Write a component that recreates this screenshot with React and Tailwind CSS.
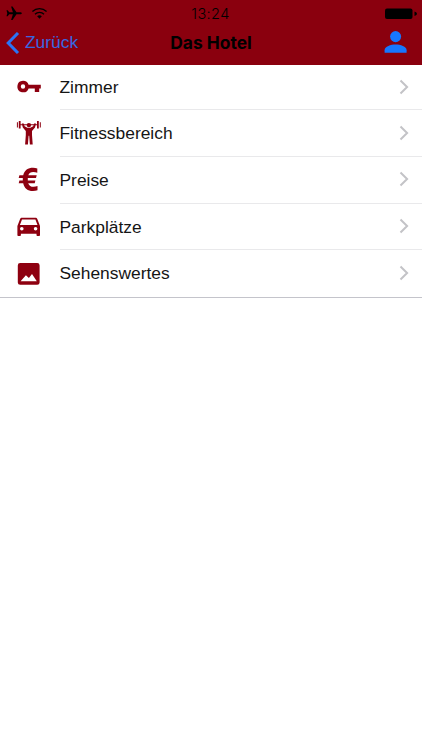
const iconClass = 'block h-7 w-7 fill-[#8e0010]'

function KeyIcon() {
  return (
    <svg viewBox="0 0 28 28" className={iconClass}>
      <path fillRule="evenodd" d="M9 6.7a5.8 5.8 0 0 1 5.6 4.1H26.8v3.7h-1.6v3.4h-4.4v-3.4h-6.2A5.8 5.8 0 1 1 9 6.7zm0 3.6a2.2 2.2 0 1 0 0 4.4 2.2 2.2 0 0 0 0-4.4z" />
    </svg>
  )
}

function FitnessIcon() {
  return (
    <svg viewBox="0 0 28 28" className={iconClass}>
      <path d="M2.9 2.2h1v5.2h-1zM4.8 1h1.8v7.6H4.8zM23 1h1.8v7.6H23zM25.8 2.2h1v5.2h-1zM6 4.3h17.2v1H6z" />
      <circle cx="14.9" cy="5.1" r="2.2" />
      <path d="M7.8 3.5h1.9l.9 2.8 2.8 1.4h3l2.8-1.4.9-2.8H22l-1 4.1-3 3.5v4l.7 9.4h-2.8l-.7-8.8h-.6l-.7 8.8h-2.8l.7-9.4v-4l-3-3.5z" />
    </svg>
  )
}

function EuroIcon() {
  return (
    <svg viewBox="0 0 28 28" className={iconClass}>
      <path d="M23.3 2.5v4.3c-1.4-.6-2.7-.8-4.1-.8-2.4 0-4.1 1-4.9 3.2h8.4l-.7 2.9h-8.2v2.3h7.6l-.7 2.8h-6.5c.8 2.5 2.6 3.6 5.4 3.6 1.4 0 2.6-.2 3.9-.7v4.2c-1.4.5-2.8.7-4.6.7-5.2 0-8.7-2.7-9.7-7.8H4.7l.7-2.8h3.4v-2.3H4.7l.7-2.9h3.8c1.2-4.9 4.8-7.4 9.9-7.4 1.6 0 2.9.2 4.2.7z" />
    </svg>
  )
}

function CarIcon() {
  return (
    <svg viewBox="0 0 28 28" className={iconClass}>
      <path fillRule="evenodd" d="M8 4.8h13.4c.9 0 1.6.5 1.9 1.3l2.7 6.8v9c0 .7-.5 1.2-1.2 1.2h-1.1c-.7 0-1.2-.5-1.2-1.2v-1.1H6.9v1.1c0 .7-.5 1.2-1.2 1.2H4.6c-.7 0-1.2-.5-1.2-1.2v-9l2.7-6.8c.3-.8 1-1.3 1.9-1.3zm0 1.6-2.1 5.5h17.6l-2.1-5.5zm-.2 7.6a1.8 1.8 0 1 0 0 3.6 1.8 1.8 0 0 0 0-3.6zm13.8 0a1.8 1.8 0 1 0 0 3.6 1.8 1.8 0 0 0 0-3.6z" />
    </svg>
  )
}

function ImageIcon() {
  return (
    <svg viewBox="0 0 28 28" className={iconClass}>
      <path fillRule="evenodd" d="M6.2 3h17a2.4 2.4 0 0 1 2.4 2.4v17a2.4 2.4 0 0 1-2.4 2.4h-17a2.4 2.4 0 0 1-2.4-2.4v-17A2.4 2.4 0 0 1 6.2 3zm.4 18.2h16.2l-4.8-7.2-3.1 4.1-3-2.8z" />
    </svg>
  )
}

const items = [
  { label: 'Zimmer', Icon: KeyIcon },
  { label: 'Fitnessbereich', Icon: FitnessIcon },
  { label: 'Preise', Icon: EuroIcon },
  { label: 'Parkplätze', Icon: CarIcon },
  { label: 'Sehenswertes', Icon: ImageIcon },
]

function StatusBar() {
  return (
    <div className="grid h-[26px] grid-cols-3 items-center pt-[2px] pr-1 pl-[6px]">
      <div className="flex items-center gap-[9px]">
        <svg viewBox="0 0 16 16" className="h-4 w-4">
          <path d="M15.8 7.3c0 .6-.8 1-1.7 1h-3.6l-4 5.7H5.1l1.8-5.7H3.2l-1.5 2H.5l.8-3-.8-3h1.2l1.5 2h3.7L5.1.6h1.4l4 5.7h3.6c.9 0 1.7.4 1.7 1z" />
        </svg>
        <svg viewBox="0 0 18 14" className="h-[14px] w-[17px]" fill="none" stroke="#000" strokeWidth="1.4">
          <path d="M1.5 4.4a10.8 10.8 0 0 1 15 0M4.2 7.2a7 7 0 0 1 9.6 0" />
          <path d="M6.5 9.5a3.7 3.7 0 0 1 5 0L9 12.1z" fill="#000" stroke="none" />
        </svg>
      </div>
      <span className="pr-[3px] text-center font-['Inter',sans-serif] text-[14.5px] leading-none font-light tracking-[0.4px] text-black">13:24</span>
      <svg viewBox="0 0 34 12" className="h-3 w-[34px] justify-self-end">
        <rect x="1" y="0.4" width="27.5" height="10.6" rx="2" />
        <path d="M30.5 3.5c1.6.5 2.4 1.2 2.4 2.2s-.8 1.7-2.4 2.2z" />
      </svg>
    </div>
  )
}

export default function App() {
  return (
    <div className="h-[750px] w-full overflow-hidden bg-white font-['Liberation_Sans',Arial,sans-serif]">
      <header className="h-[65px] bg-[#8a000e]">
        <StatusBar />
        <nav className="grid h-[34px] grid-cols-3 items-center">
          <button className="flex items-center gap-[5px] pl-[6px] text-[17.4px] leading-none text-[#3768e0]">
            <svg viewBox="0 0 14 22" className="h-[22px] w-[14px]" fill="none" stroke="#2a74f5" strokeWidth="3">
              <path d="M12 1 2.2 11 12 21" />
            </svg>
            Zurück
          </button>
          <h1 className="text-center font-['Inter',sans-serif] text-[17.4px] leading-none font-bold whitespace-nowrap text-black">Das Hotel</h1>
          <button className="justify-self-end pr-[15px] pb-[2px]">
            <svg viewBox="0 0 24 24" className="block h-6 w-6 fill-[#1677ff]">
              <ellipse cx="12.6" cy="6.6" rx="5.5" ry="5.6" />
              <path d="M1.6 22.8v-2.6c0-3.6 6.2-5.6 11-5.6s11 2 11 5.6v2.6z" />
            </svg>
          </button>
        </nav>
      </header>

      <ul className="border-b border-[#c4c4cb]">
        {items.map(({ label, Icon }, i) => (
          <li key={label} className="flex h-[46.7px] items-stretch pl-[14px] first:h-[45.4px] last:h-[46.1px]">
            <div className="flex w-[45.5px] items-center">
              <Icon />
            </div>
            <div className={`flex flex-1 items-center justify-between pr-[13px] ${i < items.length - 1 ? 'border-b border-[#e9e9eb]' : ''}`}>
              <span className="pt-[1.4px] text-[17.4px] leading-none text-[#151515]">{label}</span>
              <svg viewBox="0 0 10 16" className="mb-[1px] h-4 w-[10px]" fill="none" stroke="#c3c3c7" strokeWidth="2">
                <path d="m1.5 1.5 6.6 6.5-6.6 6.5" />
              </svg>
            </div>
          </li>
        ))}
      </ul>
    </div>
  )
}
